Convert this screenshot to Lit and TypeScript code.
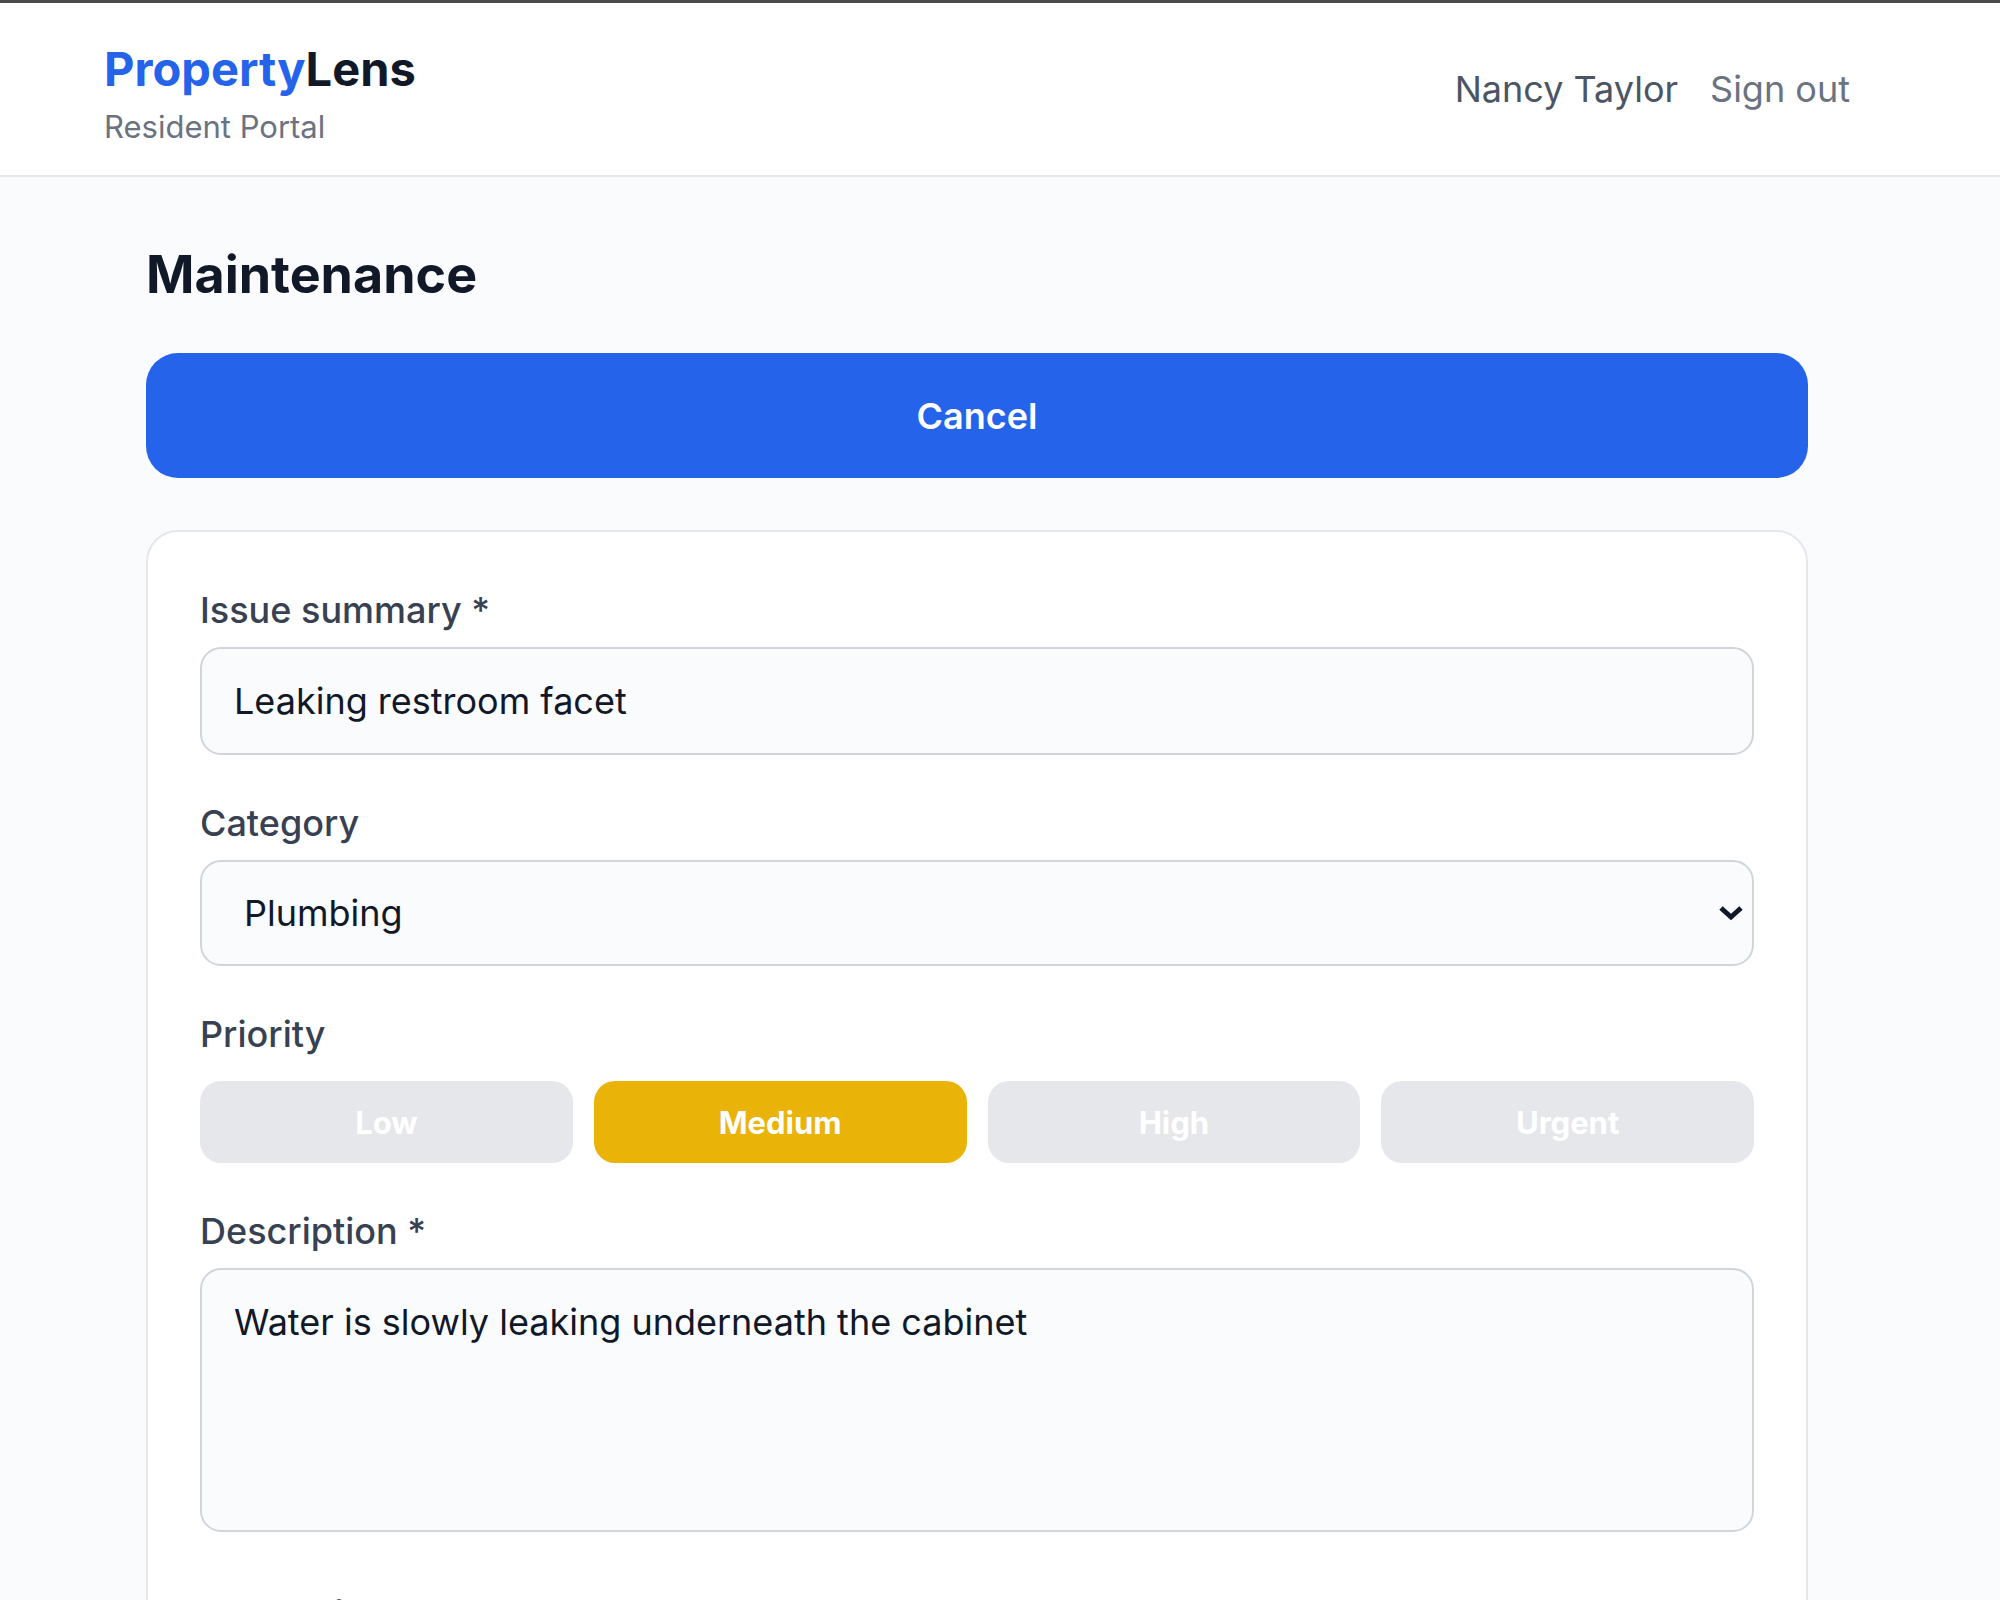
import { LitElement, html, css } from 'lit';
import { customElement, state } from 'lit/decorators.js';
import { classMap } from 'lit/directives/class-map.js';

const CATEGORIES = ['Plumbing', 'Electrical', 'HVAC', 'Appliance', 'Other'];
const PRIORITIES = ['Low', 'Medium', 'High', 'Urgent'];

@customElement('portal-header')
export class PortalHeader extends LitElement {
  static styles = css`
    :host {
      display: block;
      background-color: #fff;
      border-top: 3px solid #4b4b4b;
      border-bottom: 2px solid #e5e7eb;
    }

    .bar {
      display: flex;
      align-items: center;
      justify-content: space-between;
      padding: 28px 150px 28px 104px;
    }

    .brand {
      display: block;
      color: #111827;
      font-size: 47px;
      font-weight: 700;
      line-height: 76px;
      text-decoration: none;
    }

    .brand-accent {
      color: #2563eb;
    }

    .tagline {
      margin: 0;
      color: #6b7280;
      font-size: 31px;
      line-height: 40px;
    }

    .account {
      display: flex;
      gap: 32px;
      font-size: 36px;
      line-height: 52px;
    }

    .user {
      color: #4b5563;
    }

    .sign-out {
      padding: 0;
      border: 0;
      background: none;
      color: #6b7280;
      font: inherit;
      cursor: pointer;
    }
  `;

  render() {
    return html`
      <header class="bar">
        <div>
          <a class="brand" href="#"><span class="brand-accent">Property</span>Lens</a>
          <p class="tagline">Resident Portal</p>
        </div>
        <div class="account">
          <span class="user">Nancy Taylor</span>
          <button class="sign-out" type="button">Sign out</button>
        </div>
      </header>
    `;
  }
}

@customElement('request-form')
export class RequestForm extends LitElement {
  static styles = css`
    :host {
      display: block;
    }

    .card {
      display: flex;
      flex-direction: column;
      gap: 42px;
      padding: 52px;
      background-color: #fff;
      border: 2px solid #e5e7eb;
      border-radius: 32px;
    }

    .field {
      display: flex;
      flex-direction: column;
      gap: 11px;
    }

    .field.spaced {
      gap: 21px;
    }

    .field.uploads {
      padding-top: 16px;
    }

    .label {
      color: #374151;
      font-size: 36px;
      font-weight: 500;
      line-height: 52px;
    }

    .control {
      box-sizing: border-box;
      width: 100%;
      height: 108px;
      margin: 0;
      padding: 0 32px;
      border: 2px solid #d1d5db;
      border-radius: 21px;
      background-color: #fafbfd;
      color: #111827;
      font: inherit;
      font-size: 36px;
      line-height: 52px;
    }

    .area {
      display: block;
      height: 264px;
      padding: 26px 32px;
      resize: none;
    }

    .select-wrap {
      display: grid;
      align-items: center;
    }

    .select-wrap > * {
      grid-area: 1 / 1;
    }

    .select {
      height: 106px;
      padding: 0 42px;
      appearance: none;
    }

    .chevron {
      justify-self: end;
      width: 26px;
      height: 16px;
      margin-right: 10px;
      fill: none;
      stroke: #111827;
      stroke-width: 5;
      pointer-events: none;
    }

    .priorities {
      display: grid;
      grid-template-columns: repeat(4, 1fr);
      gap: 21px;
    }

    .priority {
      height: 82px;
      padding: 0;
      border: 0;
      border-radius: 21px;
      background-color: #e5e7eb;
      color: #fff;
      font: inherit;
      font-size: 31px;
      font-weight: 700;
      cursor: pointer;
    }

    .priority.selected {
      background-color: #eab308;
    }
  `;

  @state() priority = 'Medium';

  render() {
    return html`
      <form class="card">
        <div class="field">
          <label class="label" for="summary">Issue summary *</label>
          <input class="control" id="summary" type="text" value="Leaking restroom facet" required>
        </div>
        <div class="field">
          <label class="label" for="category">Category</label>
          <div class="select-wrap">
            <select class="control select" id="category">
              ${CATEGORIES.map((name) => html`<option>${name}</option>`)}
            </select>
            <svg class="chevron" viewBox="0 0 26 16" aria-hidden="true">
              <path d="M3 3 L13 12 L23 3" />
            </svg>
          </div>
        </div>
        <div class="field spaced" role="group" aria-labelledby="priority-label">
          <span class="label" id="priority-label">Priority</span>
          <div class="priorities">
            ${PRIORITIES.map((name) => html`
              <button
                type="button"
                class=${classMap({ priority: true, selected: name === this.priority })}
                aria-pressed=${name === this.priority}
                @click=${() => { this.priority = name; }}
              >${name}</button>
            `)}
          </div>
        </div>
        <div class="field">
          <label class="label" for="description">Description *</label>
          <textarea class="control area" id="description" required .value=${'Water is slowly leaking underneath the cabinet'}></textarea>
        </div>
        <div class="field uploads">
          <label class="label" for="photos">Photos (JPEG, PNG, optional)</label>
          <input id="photos" type="file" multiple>
        </div>
      </form>
    `;
  }
}

@customElement('app-root')
export class AppRoot extends LitElement {
  static styles = css`
    :host {
      display: block;
      height: 100vh;
      overflow: hidden;
      background-color: #fafbfd;
      color: #111827;
      font-family: Inter, 'Liberation Sans', sans-serif;
    }

    .main {
      display: flex;
      flex-direction: column;
      padding: 60px 192px 60px 146px;
    }

    .title {
      margin: 0 0 40px;
      font-size: 52px;
      font-weight: 700;
      line-height: 76px;
    }

    .cancel {
      height: 125px;
      margin-bottom: 52px;
      padding: 0;
      border: 0;
      border-radius: 32px;
      background-color: #2563eb;
      color: #fff;
      font: inherit;
      font-size: 36px;
      font-weight: 600;
      cursor: pointer;
    }
  `;

  render() {
    return html`
      <portal-header></portal-header>
      <main class="main">
        <h1 class="title">Maintenance</h1>
        <button class="cancel" type="button">Cancel</button>
        <request-form></request-form>
      </main>
    `;
  }
}
